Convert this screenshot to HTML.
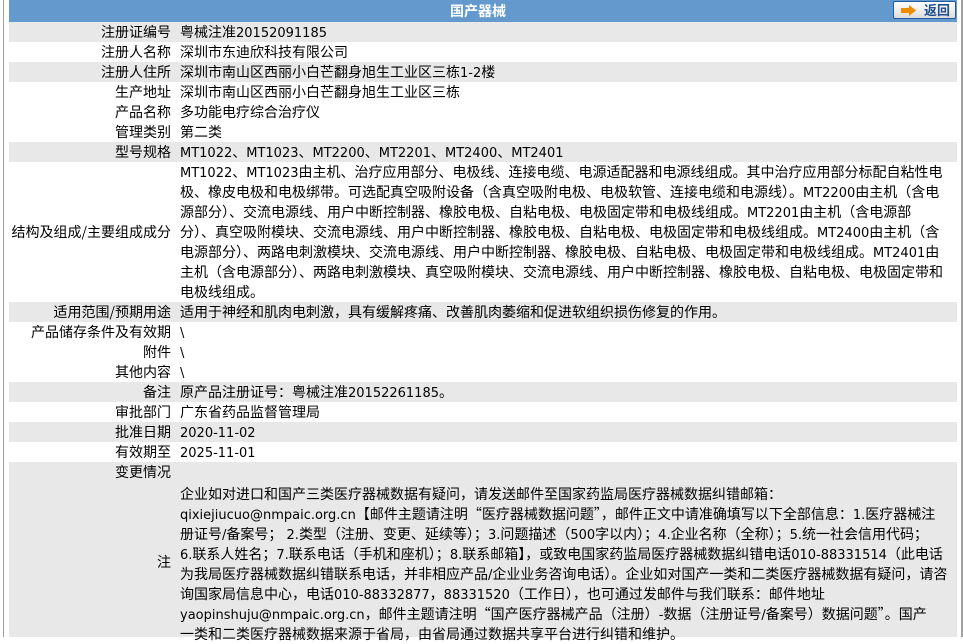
<!DOCTYPE html>
<html><head><meta charset="utf-8"><style>
*{margin:0;padding:0;box-sizing:border-box}
body{width:963px;height:637px;overflow:hidden;background:#fff;font-family:"Noto Sans CJK SC",sans-serif;font-size:14px;color:#000;position:relative}
i{font-style:normal;font-family:"DejaVu Sans",sans-serif;font-size:13px;line-height:0}
.lb{position:absolute;left:3px;top:0;width:1px;height:637px;background:#a0a0a0}
.rb{position:absolute;left:961px;top:0;width:2px;height:637px;background:#a0a0a0}
.hd{position:absolute;left:9px;top:0;width:948px;height:22px;background:#6399cc;color:#fff;font-weight:bold;font-size:14px;line-height:22px;text-align:center;padding-right:10px}
.btn{position:absolute;left:893px;top:1px;width:63px;height:18px;border:1px solid #1f5a9e;border-radius:2px;background:linear-gradient(#fff,#ddd);font-size:13px;font-weight:bold;color:#1f4f8f;line-height:16px;padding-left:30px}
.r{position:absolute;left:9px;width:948px;height:20px}
.g{background:#e8e8e8}
.l{position:absolute;left:0;width:162px;text-align:right;line-height:20px;white-space:nowrap}
.v{position:absolute;left:171px;line-height:20px;white-space:nowrap}
.v div{height:20px;line-height:20px;overflow:visible}
</style></head><body>
<div class="lb"></div><div class="rb"></div>
<div class="hd">国产器械</div>
<div class="btn"><svg style="position:absolute;left:7px;top:3px" width="16" height="11" viewBox="0 0 16 11"><path d="M0 3h8V0l7 5.5-7 5.5V8H0z" fill="#f08a00"/></svg>返回</div>

<div class="r g" style="top:22px"><div class="l">注册证编号</div><div class="v">粤械注准<i>20152091185</i></div></div>
<div class="r" style="top:42px"><div class="l">注册人名称</div><div class="v">深圳市东迪欣科技有限公司</div></div>
<div class="r g" style="top:62px"><div class="l">注册人住所</div><div class="v">深圳市南山区西丽小白芒翻身旭生工业区三栋<i>1-2</i>楼</div></div>
<div class="r" style="top:82px"><div class="l">生产地址</div><div class="v">深圳市南山区西丽小白芒翻身旭生工业区三栋</div></div>
<div class="r" style="top:102px"><div class="l">产品名称</div><div class="v">多功能电疗综合治疗仪</div></div>
<div class="r" style="top:122px"><div class="l">管理类别</div><div class="v">第二类</div></div>
<div class="r g" style="top:142px"><div class="l">型号规格</div><div class="v"><i>MT1022</i>、<i>MT1023</i>、<i>MT2200</i>、<i>MT2201</i>、<i>MT2400</i>、<i>MT2401</i></div></div>
<div class="r" style="top:162px;height:140px"><div class="l" style="top:60px">结构及组成/主要组成成分</div><div class="v">
<div><i>MT1022</i>、<i>MT1023</i>由主机、治疗应用部分、电极线、连接电缆、电源适配器和电源线组成。其中治疗应用部分标配自粘性电</div>
<div>极、橡皮电极和电极绑带。可选配真空吸附设备（含真空吸附电极、电极软管、连接电缆和电源线）。<i>MT2200</i>由主机（含电</div>
<div>源部分）、交流电源线、用户中断控制器、橡胶电极、自粘电极、电极固定带和电极线组成。<i>MT2201</i>由主机（含电源部</div>
<div>分）、真空吸附模块、交流电源线、用户中断控制器、橡胶电极、自粘电极、电极固定带和电极线组成。<i>MT2400</i>由主机（含</div>
<div>电源部分）、两路电刺激模块、交流电源线、用户中断控制器、橡胶电极、自粘电极、电极固定带和电极线组成。<i>MT2401</i>由</div>
<div>主机（含电源部分）、两路电刺激模块、真空吸附模块、交流电源线、用户中断控制器、橡胶电极、自粘电极、电极固定带和</div>
<div>电极线组成。</div></div></div>
<div class="r g" style="top:302px"><div class="l">适用范围/预期用途</div><div class="v">适用于神经和肌肉电刺激，具有缓解疼痛、改善肌肉萎缩和促进软组织损伤修复的作用。</div></div>
<div class="r" style="top:322px"><div class="l">产品储存条件及有效期</div><div class="v"><i>\</i></div></div>
<div class="r" style="top:342px"><div class="l">附件</div><div class="v"><i>\</i></div></div>
<div class="r" style="top:362px"><div class="l">其他内容</div><div class="v"><i>\</i></div></div>
<div class="r g" style="top:382px"><div class="l">备注</div><div class="v">原产品注册证号：粤械注准<i>20152261185</i>。</div></div>
<div class="r" style="top:402px"><div class="l">审批部门</div><div class="v">广东省药品监督管理局</div></div>
<div class="r g" style="top:422px"><div class="l">批准日期</div><div class="v"><i>2020-11-02</i></div></div>
<div class="r" style="top:442px"><div class="l">有效期至</div><div class="v"><i>2025-11-01</i></div></div>
<div class="r g" style="top:462px;height:175px"><div class="l">变更情况</div><div class="l" style="top:90px">注</div><div class="v" style="top:22px">
<div>企业如对进口和国产三类医疗器械数据有疑问，请发送邮件至国家药监局医疗器械数据纠错邮箱：</div>
<div><i>qixiejiucuo@nmpaic.org.cn</i>【邮件主题请注明“医疗器械数据问题”，邮件正文中请准确填写以下全部信息：<i>1.</i>医疗器械注</div>
<div>册证号<i>/</i>备案号；<i> 2.</i>类型（注册、变更、延续等）；<i>3.</i>问题描述（<i>500</i>字以内）；<i>4.</i>企业名称（全称）；<i>5.</i>统一社会信用代码；</div>
<div><i>6.</i>联系人姓名；<i>7.</i>联系电话（手机和座机）；<i>8.</i>联系邮箱】，或致电国家药监局医疗器械数据纠错电话<i>010-88331514</i>（此电话</div>
<div>为我局医疗器械数据纠错联系电话，并非相应产品<i>/</i>企业业务咨询电话）。企业如对国产一类和二类医疗器械数据有疑问，请咨</div>
<div>询国家局信息中心，电话<i>010-88332877</i>，<i>88331520</i>（工作日），也可通过发邮件与我们联系：邮件地址</div>
<div><i>yaopinshuju@nmpaic.org.cn</i>，邮件主题请注明“国产医疗器械产品（注册）<i>-</i>数据（注册证号<i>/</i>备案号）数据问题”。国产</div>
<div>一类和二类医疗器械数据来源于省局，由省局通过数据共享平台进行纠错和维护。</div></div></div>
</body></html>
